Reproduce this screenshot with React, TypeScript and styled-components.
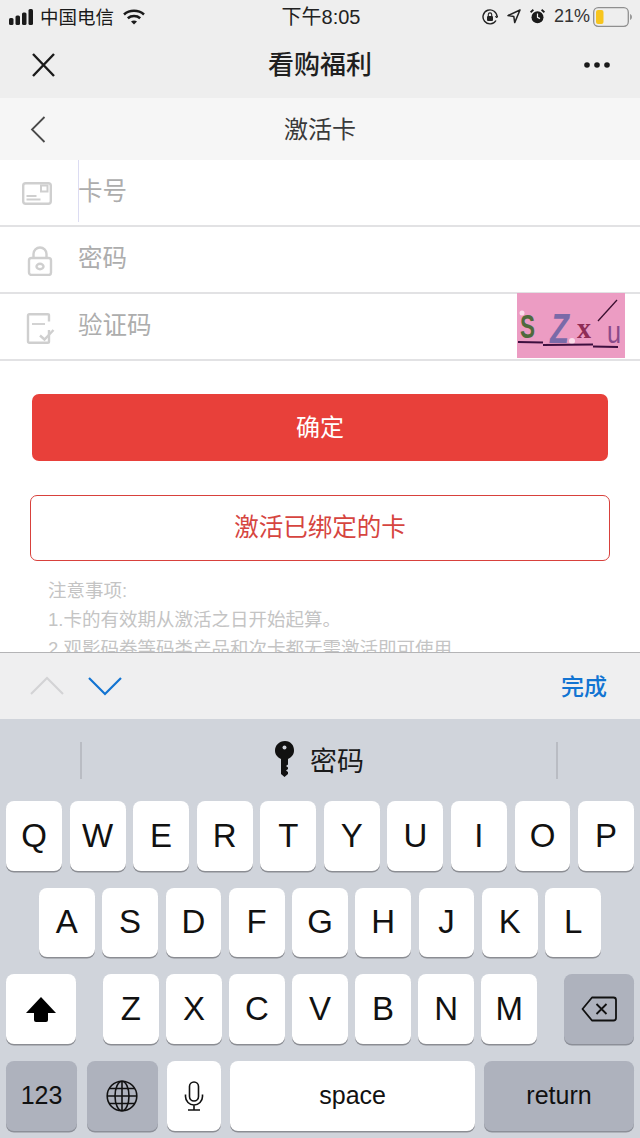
import styled, { createGlobalStyle } from "styled-components";

const GlobalStyle = createGlobalStyle`
  html, body {
    margin: 0;
    padding: 0;
    background: #fff;
  }
  * {
    box-sizing: border-box;
  }
`;

const FONT = `"Liberation Sans", "Noto Sans CJK SC", sans-serif`;

const Screen = styled.div`
  width: 640px;
  height: 1138px;
  display: flex;
  flex-direction: column;
  overflow: hidden;
  font-family: ${FONT};
`;

const TopArea = styled.div`
  height: 98px;
  background: #eeeeee;
  display: flex;
  flex-direction: column;
`;

const StatusBar = styled.div`
  height: 31px;
  padding: 1px 7px 0 9px;
  display: grid;
  grid-template-columns: 1fr auto 1fr;
  align-items: center;
  color: #1a1a1a;
  font-size: 18px;
`;

const StatusSide = styled.div<{ $end?: boolean }>`
  display: flex;
  align-items: center;
  justify-content: ${({ $end }) => ($end ? "flex-end" : "flex-start")};
  gap: ${({ $end }) => ($end ? "9px" : "5px")};
`;

const Carrier = styled.span`
  font-size: 18.5px;
  margin-right: 4px;
  padding-bottom: 2px;
`;

const Clock = styled.span`
  font-size: 20px;
  color: #222;
  padding-bottom: 2px;
`;

const Percent = styled.span`
  font-size: 18px;
  color: #333;
  margin-right: -6px;
`;

const NavBar = styled.div`
  flex: 1;
  padding: 0 29px 0 31px;
  display: flex;
  align-items: center;
  justify-content: space-between;
`;

const NavTitle = styled.div`
  font-size: 26px;
  font-weight: 500;
  color: #1f1f1f;
  padding-bottom: 4px;
`;

const SubHeader = styled.div`
  height: 62px;
  padding: 0 30px;
  background: #f6f6f6;
  display: grid;
  grid-template-columns: 1fr auto 1fr;
  align-items: center;
`;

const SubTitle = styled.div`
  font-size: 24px;
  color: #3a3a3a;
  padding-bottom: 4px;
`;

const Page = styled.div`
  height: 492px;
  overflow: hidden;
  background: #fff;
`;

const FormRow = styled.div`
  height: 67px;
  border-bottom: 2px solid #e2e2e4;
  display: flex;
  align-items: center;
  position: relative;
`;

const RowIcon = styled.div`
  width: 78px;
  padding-left: 22px;
  display: flex;
  align-items: center;
  padding-top: 3px;
  filter: blur(0.6px);
`;

const Placeholder = styled.div<{ $caret?: boolean }>`
  flex: 1;
  height: 100%;
  padding-bottom: 6px;
  display: flex;
  align-items: center;
  font-size: 24.5px;
  color: #adadad;
  position: relative;

  &::before {
    content: "";
    display: ${({ $caret }) => ($caret ? "block" : "none")};
    position: absolute;
    left: 0;
    top: 0;
    width: 1px;
    height: 62px;
    background: #dcdcf2;
  }
`;

const CaptchaBox = styled.div`
  width: 108px;
  height: 65px;
  margin: -2px 15px 0 0;
  background: #ec9cc3;
`;

const ButtonStack = styled.div`
  padding: 33px 30px 0;
  display: flex;
  flex-direction: column;
  align-items: center;
  gap: 34px;
`;

const PrimaryButton = styled.div`
  width: 576px;
  height: 67px;
  padding-bottom: 4px;
  border-radius: 7px;
  background: #e8403a;
  color: #fff;
  font-size: 24px;
  display: flex;
  align-items: center;
  justify-content: center;
`;

const OutlineButton = styled.div`
  width: 580px;
  height: 66px;
  padding-bottom: 5px;
  border-radius: 7px;
  border: 1.5px solid #d8413c;
  background: #fff;
  color: #d6453f;
  font-size: 24.5px;
  display: flex;
  align-items: center;
  justify-content: center;
`;

const Notes = styled.div`
  padding: 15px 0 0 48px;
  font-size: 18.5px;
  line-height: 29px;
  color: #c4c4c4;
  white-space: nowrap;
`;

const Toolbar = styled.div`
  height: 67px;
  padding: 0 33px 0 30px;
  background: #efeff0;
  border-top: 1px solid #b4b4b6;
  display: flex;
  align-items: center;
  gap: 24px;
`;

const DoneLabel = styled.div`
  margin-left: auto;
  padding-bottom: 2px;
  font-size: 23px;
  font-weight: 500;
  color: #1274d2;
`;

const Keyboard = styled.div`
  flex: 1;
  background: #d0d4db;
  display: flex;
  flex-direction: column;
`;

const Suggestion = styled.div`
  height: 82px;
  padding: 0 82px 0 80px;
  display: flex;
  align-items: center;
  justify-content: space-between;
`;

const SuggestDivider = styled.div`
  width: 2px;
  height: 37px;
  background: #b9bcc3;
`;

const SuggestLabel = styled.div`
  display: flex;
  align-items: center;
  gap: 14px;
  font-size: 27px;
  color: #1a1a1a;
  padding-bottom: 2px;
`;

const KeyRows = styled.div`
  display: flex;
  flex-direction: column;
  gap: 17.2px;
  padding: 0 6px;
`;

const KeyRow = styled.div<{ $inset?: number }>`
  height: 69.5px;
  display: flex;
  gap: 7.6px;
  padding: 0 ${({ $inset }) => $inset ?? 0}px;
`;

const Key = styled.div<{ $w?: number; $dark?: boolean; $small?: boolean; $mr?: number; $ml?: number }>`
  flex: ${({ $w }) => ($w ? `0 0 ${$w}px` : "1")};
  height: 69.5px;
  margin-right: ${({ $mr }) => $mr ?? 0}px;
  margin-left: ${({ $ml }) => $ml ?? 0}px;
  border-radius: 8px;
  background: ${({ $dark }) => ($dark ? "#aeb2bd" : "#ffffff")};
  box-shadow: 0 1.5px 0 ${({ $dark }) => ($dark ? "#8c8f98" : "#8b8d93")};
  display: flex;
  align-items: center;
  justify-content: center;
  font-size: ${({ $small }) => ($small ? "25px" : "33px")};
  color: #111;
`;

const SignalBars = () => (
  <svg width="26" height="16" viewBox="0 0 26 16">
    <rect x="0" y="9" width="4.5" height="7" rx="1.5" fill="#1a1a1a" />
    <rect x="6.5" y="6.5" width="4.5" height="9.5" rx="1.5" fill="#1a1a1a" />
    <rect x="13" y="3.5" width="4.5" height="12.5" rx="1.5" fill="#1a1a1a" />
    <rect x="19.5" y="0" width="4.5" height="16" rx="1.5" fill="#1a1a1a" />
  </svg>
);

const Wifi = () => (
  <svg width="22" height="16" viewBox="0 0 22 16" fill="none" stroke="#1a1a1a" strokeWidth="2.6">
    <path d="M1 5.4C6.6.6 15.4.6 21 5.4" />
    <path d="M4.8 9.2c3.5-2.9 8.9-2.9 12.4 0" />
    <path d="M11 15.6l-3-3.2c1.7-1.3 4.3-1.3 6 0z" fill="#1a1a1a" stroke="none" />
  </svg>
);

const RotationLock = () => (
  <svg width="16" height="16" viewBox="0 0 16 16" fill="none" stroke="#222" strokeWidth="1.4">
    <path d="M14 11.5A7 7 0 1 1 15 8" />
    <path d="M15.8 6.8L15 8.8 13 7.4" strokeWidth="1" />
    <rect x="5" y="7" width="6" height="5" rx="1" fill="#222" stroke="none" />
    <path d="M6.3 7V5.6a1.7 1.7 0 0 1 3.4 0V7" strokeWidth="1.1" />
  </svg>
);

const LocationArrow = () => (
  <svg width="14" height="15" viewBox="0 0 14 15" fill="none" stroke="#222" strokeWidth="1.5">
    <path d="M13 1L1 6.6l5.8.8.9 6.2z" strokeLinejoin="round" />
  </svg>
);

const Alarm = () => (
  <svg width="15" height="15" viewBox="0 0 15 15">
    <circle cx="7.5" cy="8.2" r="6" fill="#1a1a1a" />
    <path d="M7.5 4.5V8.4L10 9.6" stroke="#eee" strokeWidth="1.2" fill="none" />
    <path d="M0.6 3.2L3.4 0.8M14.4 3.2L11.6 0.8" stroke="#1a1a1a" strokeWidth="1.8" />
  </svg>
);

const Battery = () => (
  <svg width="40" height="20" viewBox="0 0 40 20" fill="none">
    <rect x="0.7" y="0.7" width="34.6" height="18.6" rx="4.5" stroke="#8f8f8f" strokeWidth="1.3" />
    <rect x="3" y="3" width="7.5" height="14" rx="2" fill="#f7c51e" />
    <path d="M37 7v6c1.3-.5 2-1.6 2-3s-.7-2.500-2-3z" fill="#9a9a9a" />
  </svg>
);

const CloseIcon = () => (
  <svg width="26" height="26" viewBox="0 0 26 26" stroke="#1a1a1a" strokeWidth="2.4">
    <path d="M2 2l21 22M23 2L2 24" />
  </svg>
);

const MoreIcon = () => (
  <svg width="28" height="8" viewBox="0 0 28 8" fill="#1a1a1a">
    <circle cx="4" cy="4" r="2.8" />
    <circle cx="14" cy="4" r="2.8" />
    <circle cx="24" cy="4" r="2.8" />
  </svg>
);

const BackIcon = () => (
  <svg width="16" height="28" viewBox="0 0 16 28" fill="none" stroke="#4a4a4a" strokeWidth="1.8">
    <path d="M14.500 2L2 14.500 14.500 27" />
  </svg>
);

const CardIcon = () => (
  <svg width="30" height="24" viewBox="0 0 30 24" fill="none" stroke="#cfcfcf" strokeWidth="2.4">
    <rect x="1.200" y="1.200" width="27.600" height="20.600" rx="2.500" />
    <rect x="19" y="3.500" width="6.500" height="6" strokeWidth="2" />
    <path d="M4.500 14h10M4.500 17.500h14" strokeWidth="1.800" />
  </svg>
);

const LockIcon = () => (
  <svg width="26" height="30" viewBox="0 0 26 30" fill="none" stroke="#cfcfcf" strokeWidth="2.400" style={{ marginLeft: 5 }}>
    <rect x="2" y="12" width="22" height="17" rx="2.500" />
    <path d="M6.500 12V8a6.500 6.500 0 0 1 13 0v4" />
    <ellipse cx="13" cy="20.500" rx="3.500" ry="2.700" />
  </svg>
);

const CheckDocIcon = () => (
  <svg width="29" height="31" viewBox="0 0 29 31" fill="none" stroke="#cfcfcf" strokeWidth="2.400" style={{ marginLeft: 4 }}>
    <path d="M23 17v11.500a1.300 1.300 0 0 1-1.300 1.300H3.300A1.300 1.300 0 0 1 2 28.500V2.500a1.300 1.300 0 0 1 1.300-1.300h18.400A1.300 1.300 0 0 1 23 2.500v6" />
    <path d="M6 11h13" strokeWidth="1.800" />
    <path d="M14 22.500l4.500 4L27.500 17" />
  </svg>
);

const CaptchaImage = () => (
  <svg width="108" height="65" viewBox="0 0 108 65" style={{ display: "block" }}>
    <circle cx="5" cy="20" r="2.500" fill="#fbdcea" />
    <circle cx="55" cy="48" r="3" fill="#fbdcea" />
    <circle cx="50" cy="24" r="2" fill="#e7e2f4" />
    <text x="3" y="45" fontFamily="Liberation Sans" fontWeight="700" fontSize="33" fill="#4f6a3c" textLength="15" lengthAdjust="spacingAndGlyphs">S</text>
    <text x="33" y="50" fontFamily="Liberation Sans" fontWeight="700" fontSize="42" fontStyle="italic" fill="#7a6aa8" textLength="19" lengthAdjust="spacingAndGlyphs">Z</text>
    <text x="60" y="45" fontFamily="Liberation Serif" fontWeight="700" fontSize="30" fill="#8f2c56" textLength="14" lengthAdjust="spacingAndGlyphs">x</text>
    <text x="90" y="50" fontFamily="Liberation Sans" fontSize="32" fill="#8a4a8a" textLength="14" lengthAdjust="spacingAndGlyphs">u</text>
    <path d="M1 49l25 .5M26 52l50-.5M76 53.500l25 .5" stroke="#3d0f3f" strokeWidth="1.800" />
    <path d="M81 28L100 7" stroke="#3a1030" strokeWidth="1.300" />
  </svg>
);

const ChevronUp = () => (
  <svg width="34" height="20" viewBox="0 0 34 20" fill="none" stroke="#d3d3d5" strokeWidth="2">
    <path d="M1 18L17 2l16 16" />
  </svg>
);

const ChevronDown = () => (
  <svg width="34" height="20" viewBox="0 0 34 20" fill="none" stroke="#1274d2" strokeWidth="2.200">
    <path d="M1 2l16 16L33 2" />
  </svg>
);

const KeyIcon = () => (
  <svg width="22" height="36" viewBox="0 0 22 36" fill="#111">
    <path d="M11 0C5 0 1 4.500 1 9.500c0 3.800 2.300 6.900 6 8.500v15l3.500 3 3.500-3v-2l-2-1.500 2-1.500v-1.500l-2-1.500 2-1.500V18c3.700-1.600 6-4.700 6-8.500C20 4.500 17 0 11 0z" />
    <circle cx="10.500" cy="6.500" r="2" fill="#d0d4db" />
  </svg>
);

const ShiftIcon = () => (
  <svg width="30" height="25" viewBox="0 0 30 25" fill="#000">
    <path d="M15 0L30 16H22V23a2 2 0 0 1-2 2H10a2 2 0 0 1-2-2V16H0z" />
  </svg>
);

const BackspaceIcon = () => (
  <svg width="36" height="26" viewBox="0 0 36 26" fill="none" stroke="#111" strokeWidth="1.800">
    <path d="M11 1.500h21.500a2.500 2.500 0 0 1 2.500 2.500v18a2.500 2.500 0 0 1-2.500 2.500H11L1.500 13z" strokeLinejoin="round" />
    <path d="M15.500 8l10 10M25.500 8l-10 10" />
  </svg>
);

const GlobeIcon = () => (
  <svg width="32" height="32" viewBox="0 0 32 32" fill="none" stroke="#111" strokeWidth="1.600">
    <circle cx="16" cy="16" r="14.800" />
    <ellipse cx="16" cy="16" rx="7" ry="14.800" />
    <path d="M16 1v30M1.200 16h29.600M3.500 8.500h25M3.500 23.500h25" />
  </svg>
);

const MicIcon = () => (
  <svg width="20" height="30" viewBox="0 0 20 30" fill="none" stroke="#111" strokeWidth="1.600">
    <rect x="5.500" y="1" width="9" height="19" rx="4.500" />
    <path d="M1.500 13.500v2a8.500 8.500 0 0 0 17 0v-2M10 24v4.500M4 29h12" />
  </svg>
);

const ROW_ONE = ["Q", "W", "E", "R", "T", "Y", "U", "I", "O", "P"];
const ROW_TWO = ["A", "S", "D", "F", "G", "H", "J", "K", "L"];
const ROW_THREE = ["Z", "X", "C", "V", "B", "N", "M"];

export default function App() {
  return (
    <>
      <GlobalStyle />
      <Screen>
        <TopArea>
          <StatusBar>
            <StatusSide>
              <SignalBars />
              <Carrier>中国电信</Carrier>
              <Wifi />
            </StatusSide>
            <Clock>下午8:05</Clock>
            <StatusSide $end>
              <RotationLock />
              <LocationArrow />
              <Alarm />
              <Percent>21%</Percent>
              <Battery />
            </StatusSide>
          </StatusBar>
          <NavBar>
            <CloseIcon />
            <NavTitle>看购福利</NavTitle>
            <MoreIcon />
          </NavBar>
        </TopArea>
        <SubHeader>
          <BackIcon />
          <SubTitle>激活卡</SubTitle>
        </SubHeader>
        <Page>
          <FormRow>
            <RowIcon>
              <CardIcon />
            </RowIcon>
            <Placeholder $caret>卡号</Placeholder>
          </FormRow>
          <FormRow>
            <RowIcon>
              <LockIcon />
            </RowIcon>
            <Placeholder>密码</Placeholder>
          </FormRow>
          <FormRow>
            <RowIcon>
              <CheckDocIcon />
            </RowIcon>
            <Placeholder>验证码</Placeholder>
            <CaptchaBox>
              <CaptchaImage />
            </CaptchaBox>
          </FormRow>
          <ButtonStack>
            <PrimaryButton>确定</PrimaryButton>
            <OutlineButton>激活已绑定的卡</OutlineButton>
          </ButtonStack>
          <Notes>
            注意事项:
            <br />
            1.卡的有效期从激活之日开始起算。
            <br />
            2.观影码券等码类产品和次卡都无需激活即可使用
          </Notes>
        </Page>
        <Toolbar>
          <ChevronUp />
          <ChevronDown />
          <DoneLabel>完成</DoneLabel>
        </Toolbar>
        <Keyboard>
          <Suggestion>
            <SuggestDivider />
            <SuggestLabel>
              <KeyIcon />
              密码
            </SuggestLabel>
            <SuggestDivider />
          </Suggestion>
          <KeyRows>
            <KeyRow>
              {ROW_ONE.map((k) => (
                <Key key={k}>{k}</Key>
              ))}
            </KeyRow>
            <KeyRow $inset={33}>
              {ROW_TWO.map((k) => (
                <Key key={k}>{k}</Key>
              ))}
            </KeyRow>
            <KeyRow>
              <Key $w={70} $mr={19.5}>
                <ShiftIcon />
              </Key>
              {ROW_THREE.map((k) => (
                <Key key={k}>{k}</Key>
              ))}
              <Key $w={70} $dark $ml={19.5}>
                <BackspaceIcon />
              </Key>
            </KeyRow>
            <KeyRow>
              <Key $w={71} $dark $small>123</Key>
              <Key $w={71} $dark $ml={2.4}>
                <GlobeIcon />
              </Key>
              <Key $w={54} $ml={1.6} $mr={1.5}>
                <MicIcon />
              </Key>
              <Key $small>space</Key>
              <Key $w={150} $dark $small $ml={1.4}>return</Key>
            </KeyRow>
          </KeyRows>
        </Keyboard>
      </Screen>
    </>
  );
}
